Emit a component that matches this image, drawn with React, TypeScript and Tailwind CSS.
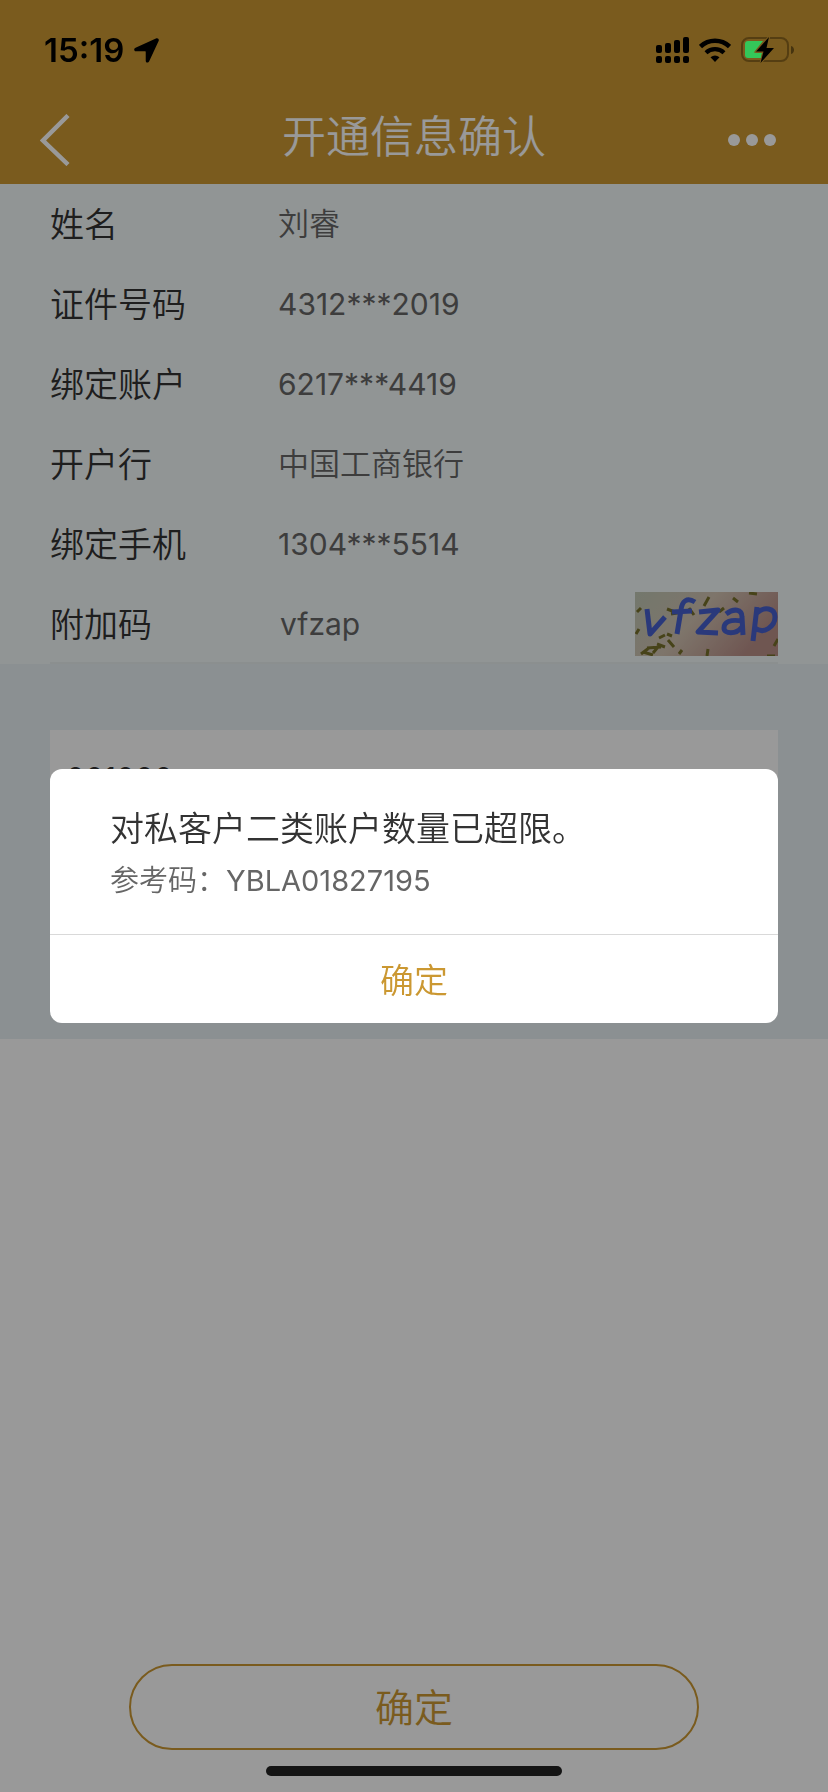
import { useState } from "react";

const FIELDS = [
  { label: "姓名", value: "刘睿" },
  { label: "证件号码", value: "4312***2019", numeric: true },
  { label: "绑定账户", value: "6217***4419", numeric: true },
  { label: "开户行", value: "中国工商银行" },
  { label: "绑定手机", value: "1304***5514", numeric: true },
];

const SPECKS =
  "M2 20l4-4M1 42l3-5M32 17l8 3M36 22l12-2M54 16l5 7M69 14l5-9M98 6l5 4M114 1l8 1M84 20l5-4M6 62l8-6M12 56l14-1M8 60l10 3M22 52l8 3M24 46l6-3M32 42l5 2M33 48l6 7M44 62l3-4M72 64l1-7M132 64l8 0M139 54l4-7M18 61l5-6";

function StatusBar() {
  return (
    <div className="relative z-20 flex h-24 items-start justify-between pt-8 pr-[34px] pl-11 text-black">
      <div className="flex h-9 items-center gap-[10px]">
        <span className="text-[33px] leading-9 font-semibold">15:19</span>
        <svg width="25" height="25" viewBox="0 0 26 26" aria-hidden="true">
          <path d="M22.800.6 1.600 10.200C-.5 11.200-.1 13.700 2 13.700h9.600c.4 0 .6.2.6.6v9.300c0 2.300 2.700 2.600 3.600.6L25.600 3.200C26.400 1.200 24.700-.3 22.800.6z" />
        </svg>
      </div>
      <div className="flex h-9 items-center gap-[10px]">
        <svg width="33" height="26" viewBox="0 0 33 26" aria-hidden="true">
          <rect x="0" y="8" width="6" height="8" rx="2" />
          <rect x="9" y="6" width="6" height="10" rx="2" />
          <rect x="18" y="3" width="6" height="13" rx="2" />
          <rect x="27" y="0" width="6" height="16" rx="2" />
          <rect x="0" y="19" width="6" height="7" rx="2" />
          <rect x="9" y="19" width="6" height="7" rx="2" />
          <rect x="18" y="19" width="6" height="7" rx="2" />
          <rect x="27" y="19" width="6" height="7" rx="2" />
        </svg>
        <svg width="32" height="24" viewBox="0 0 32 24" aria-hidden="true">
          <path d="M1.500 8.500a21 21 0 0 1 29 0" fill="none" stroke="currentColor" strokeWidth="4.500" />
          <path d="M7 14.800a13 13 0 0 1 18 0" fill="none" stroke="currentColor" strokeWidth="4.200" />
          <path d="M11.500 19.200a7.500 7.500 0 0 1 9 0L16 24z" />
        </svg>
        <svg width="53" height="26" viewBox="0 0 53 26" aria-hidden="true">
          <rect x="1" y="1" width="46" height="23" rx="7" fill="none" stroke="#553e12" strokeWidth="2" />
          <path d="M50 9c4 1 4 7 0 8z" fill="#46340f" />
          <path d="M7 4h15l-8 10c-.6 1 0 2 1 2h6l-1 5H7c-2 0-3-1-3-3V7c0-2 1-3 3-3z" fill="#34c759" />
          <path
            d="M28 0 15 14.500h7.500L19.500 26 33 11h-7.500z"
            stroke="#7a5b1e"
            strokeWidth="2"
            paintOrder="stroke"
          />
        </svg>
      </div>
    </div>
  );
}

function NavBar() {
  return (
    <div className="grid h-[88px] grid-cols-[1fr_auto_1fr] items-center px-10 text-white">
      <button aria-label="返回" className="justify-self-start">
        <svg width="30" height="52" viewBox="0 0 30 52" fill="none" stroke="currentColor" strokeWidth="4.500">
          <path d="M28 1.500 3 26.500 28 50.500" />
        </svg>
      </button>
      <h1 className="pb-[6px] text-[44px] leading-[60px]">开通信息确认</h1>
      <button aria-label="更多" className="flex gap-[6px] justify-self-end pr-3">
        <span className="size-3 rounded-full bg-white" />
        <span className="size-3 rounded-full bg-white" />
        <span className="size-3 rounded-full bg-white" />
      </button>
    </div>
  );
}

function Captcha() {
  return (
    <svg className="shrink-0" width="143" height="64" viewBox="0 0 143 64" role="img" aria-label="vfzap">
      <defs>
        <linearGradient id="captcha" x1="0" x2="1" y1="0" y2="0.4">
          <stop offset="0" stopColor="#c0c8b6" />
          <stop offset="0.5" stopColor="#d2c3b2" />
          <stop offset="1" stopColor="#b98f88" />
        </linearGradient>
      </defs>
      <rect width="143" height="64" fill="url(#captcha)" />
      <path d={SPECKS} stroke="#77702b" strokeWidth="3" fill="none" />
      <g fill="none" stroke="#4660ce" strokeWidth="5" strokeLinejoin="round">
        <path d="M12 17l3 25L30 25" />
        <path d="M60 10c-8-5-13-1-14 8l-4 24M37 20l20-1" />
        <path d="M64 20l19-2-20 22 20 1" />
        <path d="M91 22c8-6 16-5 16 3l1 18M107 29c-12-2-18 1-18 7s12 7 18-1" />
        <path d="M122 15l-4 34M122 21c7-7 18-5 18 4s-11 18-20 11" />
      </g>
    </svg>
  );
}

function ErrorDialog({ onClose }: { onClose: () => void }) {
  return (
    <div className="fixed inset-0 z-10 flex items-center bg-black/40 px-[50px]">
      <div role="alertdialog" aria-labelledby="error-title" className="w-full overflow-hidden rounded-xl bg-white">
        <div className="px-[60px] pt-[34px] pb-7">
          <p id="error-title" className="text-[34px] leading-[52px] text-[#333]">
            对私客户二类账户数量已超限。
          </p>
          <p className="text-[29px] leading-[51px] text-[#666]">
            参考码：<span className="font-normal">YBLA01827195</span>
          </p>
        </div>
        <button
          onClick={onClose}
          className="block h-[89px] w-full border-t border-[#d9d9d9] pt-0.5 text-[34px] text-[#cb9832]"
        >
          确定
        </button>
      </div>
    </div>
  );
}

export default function App() {
  const [open, setOpen] = useState(true);
  const [code, setCode] = useState("vfzap");
  const [sms, setSms] = useState("001000");

  return (
    <div className="flex min-h-screen flex-col bg-white font-['Inter','Noto_Sans_CJK_SC',sans-serif] font-[350]">
      <header className="bg-[#cb9832]">
        <StatusBar />
        <NavBar />
      </header>

      <main className="flex grow flex-col">
        <section className="bg-[#f2f8f8] px-[50px]">
          <dl>
            {FIELDS.map((f) => (
              <div key={f.label} className="flex h-20 items-center">
                <dt className="w-[228px] shrink-0 text-[34px] text-[#333]">{f.label}</dt>
                <dd className={f.numeric ? "text-[30px] font-normal text-[#666]" : "text-[31px] text-[#666]"}>
                  {f.value}
                </dd>
              </div>
            ))}
          </dl>
          <div className="flex h-20 items-center border-b-2 border-[#e8eeef] pt-0.5">
            <label htmlFor="code" className="w-[228px] shrink-0 text-[34px] text-[#333]">
              附加码
            </label>
            <input
              id="code"
              value={code}
              onChange={(e) => setCode(e.target.value)}
              className="min-w-0 grow px-0.5 text-[30px] font-normal text-[#666] outline-none"
            />
            <Captcha />
          </div>
        </section>

        <section className="h-[375px] bg-[#e8f0f3] px-[50px] pt-[66px]">
          <input
            aria-label="短信验证码"
            value={sms}
            onChange={(e) => setSms(e.target.value)}
            className="h-24 w-full bg-white px-4 text-[30px] font-normal text-[#333] outline-none"
          />
        </section>
      </main>

      <footer className="flex flex-col items-center pb-4">
        <button className="mb-4 h-[86px] w-[570px] rounded-full border-2 border-[#cb9832] pt-0.5 text-[39px] text-[#cb9832]">
          确定
        </button>
        <div className="h-[10px] w-[296px] rounded-full bg-[#222]" />
      </footer>

      {open && <ErrorDialog onClose={() => setOpen(false)} />}
    </div>
  );
}
